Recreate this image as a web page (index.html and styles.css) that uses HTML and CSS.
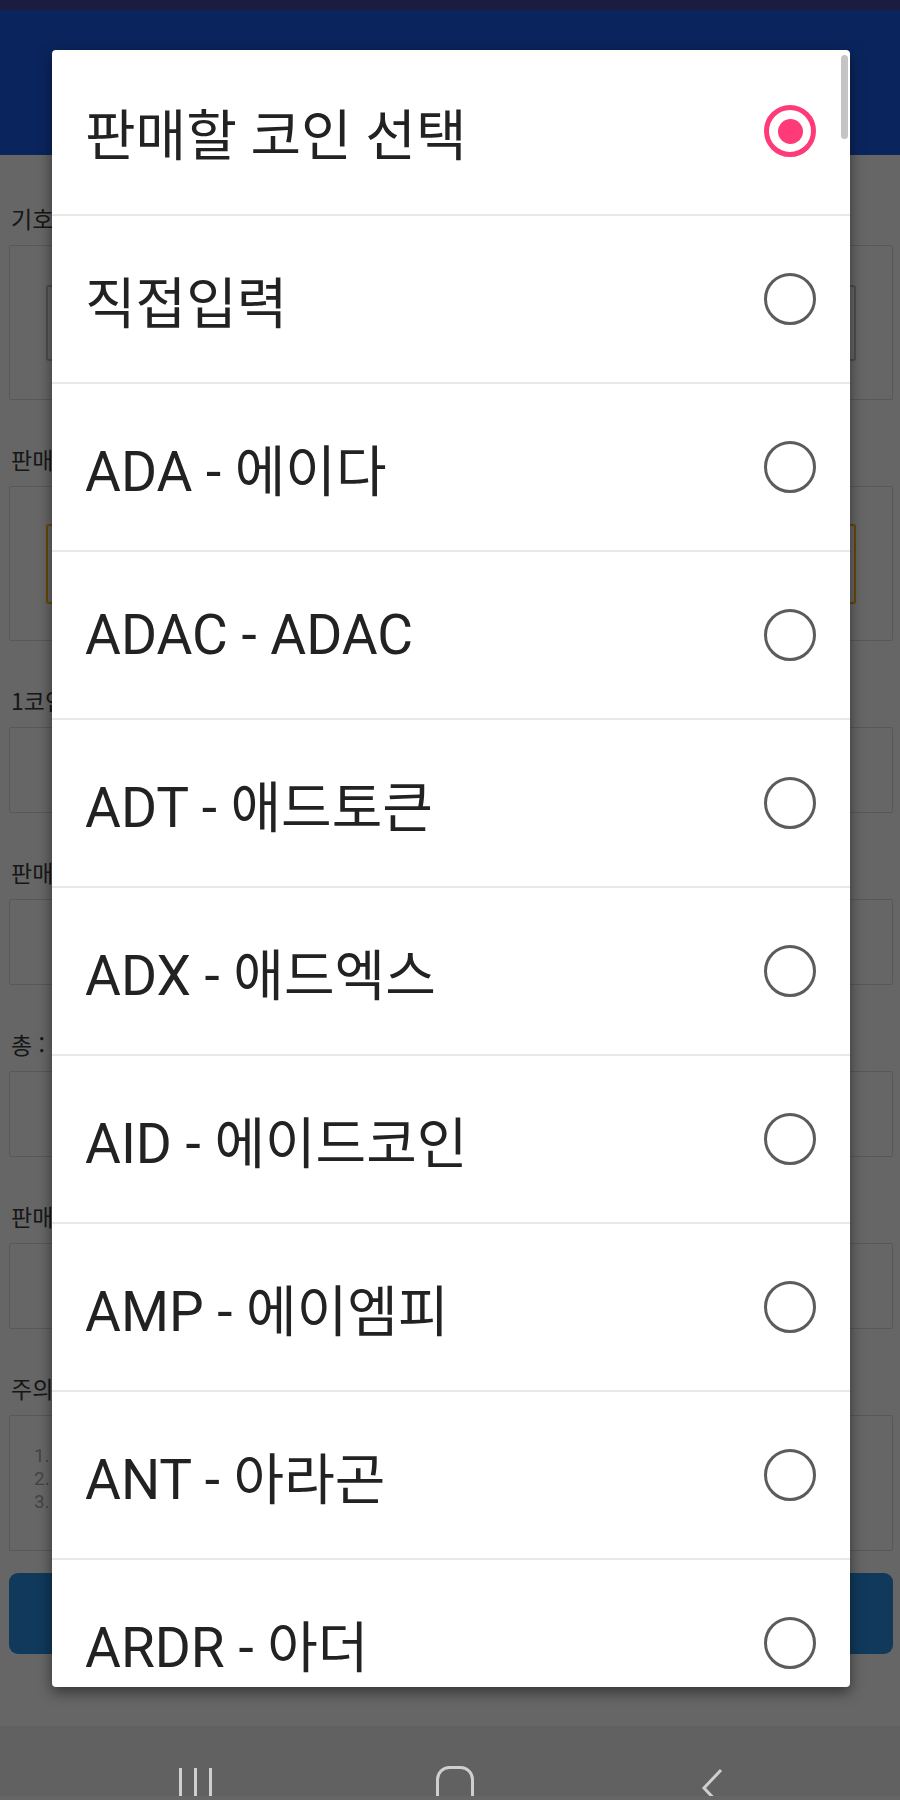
FILE: index.html
```html
<!DOCTYPE html>
<html lang="ko">
<head>
  <meta charset="UTF-8" />
  <meta name="viewport" content="width=device-width, initial-scale=1.0">
  <title>판매할 코인 선택</title>
  <link rel="stylesheet" href="styles.css">
</head>
<body>
  <div class="screen">
    <div class="status-bar"></div>
    <header class="app-bar"></header>

    <main class="form">
      <div class="field">
        <label class="field-label">기호</label>
        <div class="field-box box-spinner"><div class="spinner"></div></div>
      </div>
      <div class="field">
        <label class="field-label">판매</label>
        <div class="field-box box-spinner"><div class="spinner spinner-active"></div></div>
      </div>
      <div class="field">
        <label class="field-label">1코인</label>
        <div class="field-box box-short"></div>
      </div>
      <div class="field">
        <label class="field-label">판매</label>
        <div class="field-box box-short"></div>
      </div>
      <div class="field">
        <label class="field-label">총 :</label>
        <div class="field-box box-short"></div>
      </div>
      <div class="field">
        <label class="field-label">판매</label>
        <div class="field-box box-short"></div>
      </div>
      <div class="field">
        <label class="field-label">주의</label>
        <div class="field-box box-notes">
          <p>1.</p>
          <p>2.</p>
          <p>3.</p>
        </div>
      </div>
    </main>

    <button class="calc-button"></button>

    <div class="scrim"></div>

    <div class="dialog">
      <ul class="option-list">
        <li class="option"><span class="option-text">판매할 코인 선택</span><span class="radio checked"></span></li>
        <li class="option"><span class="option-text">직접입력</span><span class="radio"></span></li>
        <li class="option"><span class="option-text">ADA - 에이다</span><span class="radio"></span></li>
        <li class="option"><span class="option-text">ADAC - ADAC</span><span class="radio"></span></li>
        <li class="option"><span class="option-text">ADT - 애드토큰</span><span class="radio"></span></li>
        <li class="option"><span class="option-text">ADX - 애드엑스</span><span class="radio"></span></li>
        <li class="option"><span class="option-text">AID - 에이드코인</span><span class="radio"></span></li>
        <li class="option"><span class="option-text">AMP - 에이엠피</span><span class="radio"></span></li>
        <li class="option"><span class="option-text">ANT - 아라곤</span><span class="radio"></span></li>
        <li class="option"><span class="option-text">ARDR - 아더</span><span class="radio"></span></li>
      </ul>
      <div class="scrollbar"></div>
    </div>

    <nav class="nav-bar">
      <svg width="900" height="70" viewBox="0 0 900 70" fill="none" stroke="#cfcfcf" stroke-width="3">
        <line x1="180.5" y1="42" x2="180.5" y2="80" />
        <line x1="195.5" y1="42" x2="195.5" y2="80" />
        <line x1="210.5" y1="42" x2="210.5" y2="80" />
        <rect x="437.5" y="41.5" width="35" height="45" rx="12" />
        <polyline points="721,44 704,62 721,80" />
      </svg>
    </nav>
  </div>
</body>
</html>
```

FILE: styles.css
```css
* {
  box-sizing: border-box;
}

body {
  margin: 0;
  font-family: Roboto, "Noto Sans CJK KR", sans-serif;
  background: #fff;
}

.screen {
  position: relative;
  width: 900px;
  height: 1800px;
  overflow: hidden;
  background: #fff;
}

.status-bar {
  position: relative;
  z-index: 3;
  height: 10px;
  background: #1c1c40;
}

.app-bar {
  height: 145px;
  background: #1a5cec;
}

/* form under the dialog */
.form {
  padding: 4px 7px 0 9px;
}

.field-label {
  display: block;
  margin: 44px 0 12px 2px;
  font-family: "Noto Sans CJK KR", sans-serif;
  font-size: 23px;
  line-height: 30px;
  color: #3a3a3a;
}

.field-box {
  border: 1px solid #dcdcdc;
  border-radius: 2px;
}

.box-spinner {
  height: 155px;
  display: flex;
  align-items: center;
  padding: 0 36px;
}

.spinner {
  flex: 1;
  height: 76px;
  border: 2px solid #c4c4c4;
  border-radius: 3px;
}

.spinner-active {
  height: 80px;
  border-color: #ffb300;
}

.box-short {
  height: 86px;
}

.box-notes {
  height: 136px;
  padding: 28px 0 0 24px;
  font-family: Roboto, sans-serif;
  font-size: 19px;
  line-height: 23px;
  color: #aaa;
}

.box-notes p {
  margin: 0;
}

.calc-button {
  display: block;
  width: 884px;
  height: 81px;
  margin: 22px 0 0 9px;
  border: none;
  border-radius: 9px;
  background: #2a8ee6;
}

.scrim {
  position: absolute;
  inset: 0;
  z-index: 1;
  background: rgba(0, 0, 0, 0.6);
}

/* the open spinner list */
.dialog {
  position: absolute;
  z-index: 2;
  left: 52px;
  top: 50px;
  width: 798px;
  height: 1637px;
  background: #fff;
  border-radius: 4px;
  overflow: hidden;
  box-shadow: 0 5px 14px rgba(0, 0, 0, 0.5);
}

.option-list {
  list-style: none;
  margin: -2px 0 0;
  padding: 0;
}

.option {
  display: flex;
  align-items: center;
  justify-content: space-between;
  height: 168px;
  padding: 0 34px 0 33px;
  border-bottom: 2px solid #e8e8e8;
}

.option-text {
  font-size: 55px;
  color: #222;
  white-space: nowrap;
}

.radio {
  width: 52px;
  height: 52px;
  border: 3.5px solid #5c5c5c;
  border-radius: 50%;
  display: flex;
  align-items: center;
  justify-content: center;
}

.radio.checked {
  border: 5px solid #ff3a78;
}

.radio.checked::after {
  content: "";
  width: 25px;
  height: 25px;
  border-radius: 50%;
  background: #ff3a78;
}

.scrollbar {
  position: absolute;
  top: 5px;
  right: 2px;
  width: 7px;
  height: 84px;
  border-radius: 4px;
  background: #c4c4c4;
}

.nav-bar {
  position: relative;
  z-index: 3;
  margin-top: 72px;
  height: 70px;
  background: #616161;
}

.nav-bar svg {
  display: block;
}
```
